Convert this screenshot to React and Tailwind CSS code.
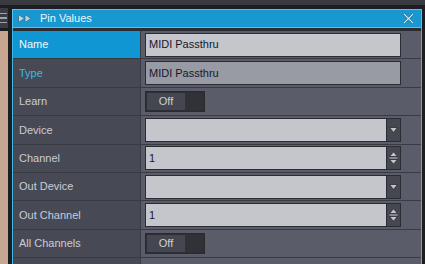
import React from "react";

const font = { fontFamily: '"Liberation Sans", Arial, sans-serif' };

function DownTri() {
  return (
    <svg width="9" height="6" viewBox="0 0 9 6">
      <path d="M0.5 0.5 H8.5 L4.5 5.5 Z" fill="#c3c5cc" stroke="#2a2b30" strokeWidth="0.8" />
    </svg>
  );
}

function Input({ value, dim }) {
  return (
    <div
      className={`h-[24px] w-[256px] border border-[#2b2c31] flex items-center pl-[3px] text-[11px] text-[#15172e] ${
        dim ? "bg-[#989aa4]" : "bg-[#c4c6cc]"
      }`}
    >
      {value}
    </div>
  );
}

function Dropdown({ value, spin }) {
  return (
    <div className="h-[24px] w-[256px] flex">
      <div className="flex-1 border border-[#2b2c31] border-r-0 bg-[#c4c6cc] flex items-center pl-[3px] text-[11px] text-[#15172e]">
        {value}
      </div>
      <div className="w-[15px] border border-[#2b2c31] bg-[#464851] flex flex-col items-center justify-center">
        {spin ? (
          <svg width="9" height="14" viewBox="0 0 9 14">
            <path d="M0.5 5.5 H8.5 L4.5 0.8 Z" fill="#c3c5cc" stroke="#2a2b30" strokeWidth="0.8" />
            <line x1="0.5" y1="7" x2="8.5" y2="7" stroke="#c3c5cc" strokeWidth="1" />
            <path d="M0.5 8.5 H8.5 L4.5 13.2 Z" fill="#c3c5cc" stroke="#2a2b30" strokeWidth="0.8" />
          </svg>
        ) : (
          <DownTri />
        )}
      </div>
    </div>
  );
}

function Toggle() {
  return (
    <div className="h-[21px] w-[60px] bg-[#2e2f34] border border-[#2a2b2f] flex p-[1px]">
      <div className="w-[38px] bg-[#44474f] flex items-center justify-center text-[11px] text-[#cdd0d6]">
        Off
      </div>
      <div className="flex-1 bg-[#313237]" />
    </div>
  );
}

const rows = [
  { label: "Name", kind: "input", value: "MIDI Passthru", active: true },
  { label: "Type", kind: "input", value: "MIDI Passthru", dim: true, blue: true },
  { label: "Learn", kind: "toggle" },
  { label: "Device", kind: "dropdown", value: "" },
  { label: "Channel", kind: "spin", value: "1" },
  { label: "Out Device", kind: "dropdown", value: "" },
  { label: "Out Channel", kind: "spin", value: "1" },
  { label: "All Channels", kind: "toggle" },
  { label: "", kind: "empty" },
];

export default function App() {
  return (
    <div className="w-[425px] h-[264px] overflow-hidden bg-[#1d1e21] flex flex-col" style={font}>
      <div className="h-[5px] bg-[#3a3b40] shrink-0" />
      <div className="h-[3px] shrink-0" />
      <div className="flex flex-1 min-h-0">
        {/* left strip */}
        <div className="w-[8px] flex flex-col shrink-0">
          <div className="h-[20px] bg-[#3b3c41] flex flex-col justify-center gap-[3px] pl-0">
            <div className="h-[1.5px] w-[7px] bg-[#9fa1a8]" />
            <div className="h-[1.5px] w-[7px] bg-[#9fa1a8]" />
            <div className="h-[1.5px] w-[7px] bg-[#9fa1a8]" />
          </div>
          <div className="h-[3px]" />
          <div className="flex-1 bg-[#c7a692]" />
        </div>
        <div className="w-[4px] shrink-0" />
        {/* panel */}
        <div className="w-[410px] flex flex-col shrink-0 pt-[1px]">
          <div className="h-[19px] shrink-0 bg-[#1897d0] border border-[#55c2ee] flex items-center">
            <svg width="15" height="9" viewBox="0 0 15 9" className="ml-[5px]">
              <path d="M0.5 0.5 L6.5 4.5 L0.5 8.5 Z" fill="#a9d8ee" stroke="#3b6f88" strokeWidth="0.8" />
              <path d="M7 0.5 L13 4.5 L7 8.5 Z" fill="#a9d8ee" stroke="#3b6f88" strokeWidth="0.8" />
            </svg>
            <span className="ml-[7px] text-[11px] text-[#eef6fb]">Pin Values</span>
            <div className="flex-1" />
            <svg width="11" height="11" viewBox="0 0 11 11" className="mr-[7px]">
              <path d="M1 1 L10 10 M10 1 L1 10" stroke="#24546a" strokeWidth="2.4" />
              <path d="M1 1 L10 10 M10 1 L1 10" stroke="#d9eef8" strokeWidth="1.1" />
            </svg>
          </div>
          <div className="flex-1 border-l border-r border-[#3fb6e8] bg-[#2b2c31] pt-[3px] flex flex-col min-h-0">
            {rows.map((r, i) => (
              <div key={i} className="h-[28.4px] shrink-0 flex border-b border-[#393b43]">
                <div
                  className={`w-[127px] flex items-center pl-[6px] text-[11px] ${
                    r.active
                      ? "bg-[#0f96d3] text-[#f3f8fc]"
                      : r.blue
                      ? "bg-[#474a55] text-[#3db7ea]"
                      : "bg-[#474a55] text-[#c9ccd4]"
                  }`}
                >
                  {r.label}
                </div>
                <div className="w-[1px] bg-[#393b43]" />
                <div className="flex-1 bg-[#5a5c69] flex items-center pl-[4px]">
                  {r.kind === "input" && <Input value={r.value} dim={r.dim} />}
                  {r.kind === "toggle" && <Toggle />}
                  {r.kind === "dropdown" && <Dropdown value={r.value} />}
                  {r.kind === "spin" && <Dropdown value={r.value} spin />}
                </div>
              </div>
            ))}
          </div>
        </div>
      </div>
    </div>
  );
}
